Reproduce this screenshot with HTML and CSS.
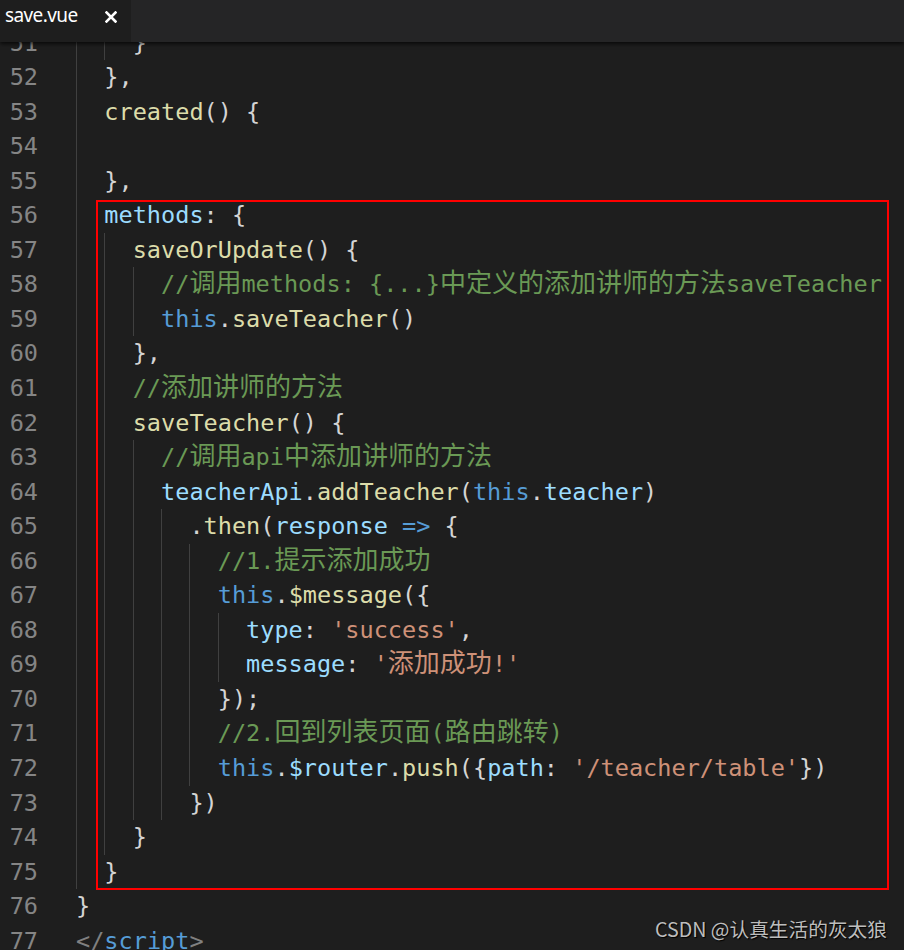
FILE: index.html
```html
<!DOCTYPE html>
<html lang="zh">
<head>
<meta charset="utf-8">
<title>save.vue</title>
<link rel="stylesheet" href="styles.css">
</head>
<body>
<div class="window">
  <div class="tabs">
    <div class="tab">
      <span class="tab-name">save.vue</span>
      <span class="tab-close"><svg width="12" height="12" viewBox="0 0 12 12"><path d="M1.5 1.5 L10.5 10.5 M10.5 1.5 L1.5 10.5" stroke="#ffffff" stroke-width="2.6" stroke-linecap="square" fill="none"/></svg></span>
    </div>
  </div>
  <div class="editor">
    <div class="lines">
      <div class="line"><span class="ln">51</span><span class="code"><span class="ind"></span><span class="ind"></span>}</span></div>
      <div class="line"><span class="ln">52</span><span class="code"><span class="ind"></span>},</span></div>
      <div class="line"><span class="ln">53</span><span class="code"><span class="ind"></span><span class="f">created</span>() {</span></div>
      <div class="line"><span class="ln">54</span><span class="code"><span class="ind"></span></span></div>
      <div class="line"><span class="ln">55</span><span class="code"><span class="ind"></span>},</span></div>
      <div class="line"><span class="ln">56</span><span class="code"><span class="ind"></span><span class="v">methods</span>: {</span></div>
      <div class="line"><span class="ln">57</span><span class="code"><span class="ind"></span><span class="ind"></span><span class="f">saveOrUpdate</span>() {</span></div>
      <div class="line"><span class="ln">58</span><span class="code"><span class="ind"></span><span class="ind"></span><span class="ind"></span><span class="c">//<span class="cjk">调用</span>methods: {...}<span class="cjk">中定义的添加讲师的方法</span>saveTeacher</span></span></div>
      <div class="line"><span class="ln">59</span><span class="code"><span class="ind"></span><span class="ind"></span><span class="ind"></span><span class="k">this</span>.<span class="f">saveTeacher</span>()</span></div>
      <div class="line"><span class="ln">60</span><span class="code"><span class="ind"></span><span class="ind"></span>},</span></div>
      <div class="line"><span class="ln">61</span><span class="code"><span class="ind"></span><span class="ind"></span><span class="c">//<span class="cjk">添加讲师的方法</span></span></span></div>
      <div class="line"><span class="ln">62</span><span class="code"><span class="ind"></span><span class="ind"></span><span class="f">saveTeacher</span>() {</span></div>
      <div class="line"><span class="ln">63</span><span class="code"><span class="ind"></span><span class="ind"></span><span class="ind"></span><span class="c">//<span class="cjk">调用</span>api<span class="cjk">中添加讲师的方法</span></span></span></div>
      <div class="line"><span class="ln">64</span><span class="code"><span class="ind"></span><span class="ind"></span><span class="ind"></span><span class="v">teacherApi</span>.<span class="f">addTeacher</span>(<span class="k">this</span>.<span class="v">teacher</span>)</span></div>
      <div class="line"><span class="ln">65</span><span class="code"><span class="ind"></span><span class="ind"></span><span class="ind"></span><span class="ind"></span>.<span class="f">then</span>(<span class="v">response</span> <span class="k">=&gt;</span> {</span></div>
      <div class="line"><span class="ln">66</span><span class="code"><span class="ind"></span><span class="ind"></span><span class="ind"></span><span class="ind"></span><span class="ind"></span><span class="c">//1.<span class="cjk">提示添加成功</span></span></span></div>
      <div class="line"><span class="ln">67</span><span class="code"><span class="ind"></span><span class="ind"></span><span class="ind"></span><span class="ind"></span><span class="ind"></span><span class="k">this</span>.<span class="f">$message</span>({</span></div>
      <div class="line"><span class="ln">68</span><span class="code"><span class="ind"></span><span class="ind"></span><span class="ind"></span><span class="ind"></span><span class="ind"></span><span class="ind"></span><span class="v">type</span>: <span class="s">'success'</span>,</span></div>
      <div class="line"><span class="ln">69</span><span class="code"><span class="ind"></span><span class="ind"></span><span class="ind"></span><span class="ind"></span><span class="ind"></span><span class="ind"></span><span class="v">message</span>: <span class="s">'<span class="cjk">添加成功</span>!'</span></span></div>
      <div class="line"><span class="ln">70</span><span class="code"><span class="ind"></span><span class="ind"></span><span class="ind"></span><span class="ind"></span><span class="ind"></span>});</span></div>
      <div class="line"><span class="ln">71</span><span class="code"><span class="ind"></span><span class="ind"></span><span class="ind"></span><span class="ind"></span><span class="ind"></span><span class="c">//2.<span class="cjk">回到列表页面</span>(<span class="cjk">路由跳转</span>)</span></span></div>
      <div class="line"><span class="ln">72</span><span class="code"><span class="ind"></span><span class="ind"></span><span class="ind"></span><span class="ind"></span><span class="ind"></span><span class="k">this</span>.<span class="v">$router</span>.<span class="f">push</span>({<span class="v">path</span>: <span class="s">'/teacher/table'</span>})</span></div>
      <div class="line"><span class="ln">73</span><span class="code"><span class="ind"></span><span class="ind"></span><span class="ind"></span><span class="ind"></span>})</span></div>
      <div class="line"><span class="ln">74</span><span class="code"><span class="ind"></span><span class="ind"></span>}</span></div>
      <div class="line"><span class="ln">75</span><span class="code"><span class="ind"></span>}</span></div>
      <div class="line"><span class="ln">76</span><span class="code">}</span></div>
      <div class="line"><span class="ln">77</span><span class="code"><span class="t">&lt;/</span><span class="k">script</span><span class="t">&gt;</span></span></div>
    </div>
  </div>
  <div class="highlight-box"></div>
  <div class="watermark">CSDN @认真生活的灰太狼</div>
</div>
</body>
</html>
```

FILE: styles.css
```css
* { box-sizing: border-box; }

html, body {
  margin: 0;
  padding: 0;
  background: #1e1e1e;
}

body {
  width: 904px;
  height: 950px;
  overflow: hidden;
  font-family: "DejaVu Sans Mono", "Noto Sans CJK SC", monospace;
}

.window {
  position: relative;
  width: 904px;
  height: 950px;
  display: flex;
  flex-direction: column;
}

.tabs {
  flex: none;
  height: 42px;
  background: #252526;
  display: flex;
  position: relative;
  z-index: 2;
  box-shadow: 0 2px 4px rgba(0, 0, 0, 0.7);
}

.tab {
  width: 131px;
  background: #1e1e1e;
  display: flex;
  align-items: flex-start;
  padding-top: 2px;
  padding-left: 5px;
}

.tab-name {
  font-family: "Noto Sans", "Open Sans", sans-serif;
  font-size: 19px;
  line-height: 26px;
  color: #ffffff;
  letter-spacing: -0.6px;
}

.tab-close {
  display: flex;
  margin-left: auto;
  margin-right: 14px;
  margin-top: 9px;
}

.editor {
  flex: 1;
  overflow: hidden;
  position: relative;
}

.lines {
  margin-top: -16.5px;
}

.line {
  display: flex;
  height: 34.55px;
  font-size: 23.55px;
  line-height: 34.55px;
  white-space: pre;
}

.ln {
  flex: none;
  width: 38px;
  margin-right: 38px;
  text-align: right;
  color: #858585;
}

.code {
  color: #d4d4d4;
}

.ind {
  display: inline-block;
  width: 2ch;
  height: 34.55px;
  vertical-align: top;
  border-left: 1px solid #404040;
}

.cjk {
  font-family: "Noto Sans CJK SC", sans-serif;
  font-size: 26px;
  line-height: 0;
}

.f { color: #dcdcaa; }
.v { color: #9cdcfe; }
.k { color: #569cd6; }
.s { color: #ce9178; }
.c { color: #6a9955; }
.t { color: #808080; }

.highlight-box {
  position: absolute;
  left: 96px;
  top: 200px;
  width: 793px;
  height: 690px;
  border: 2px solid #ff0000;
  pointer-events: none;
}

.watermark {
  position: absolute;
  right: 17px;
  top: 916px;
  font-family: "Noto Sans CJK SC", "Liberation Sans", sans-serif;
  font-size: 19.7px;
  line-height: 26px;
  color: #bdbdbd;
  text-shadow: 1px 1px 1px #000000;
}
```
